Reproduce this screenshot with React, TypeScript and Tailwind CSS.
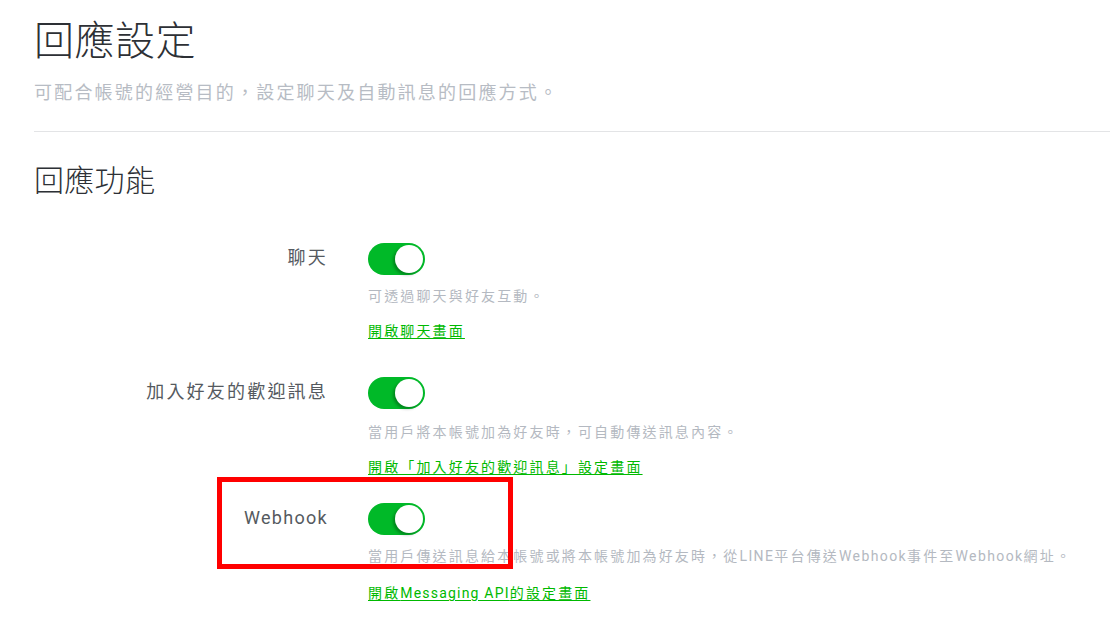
import React from "react";

const FONT = { fontFamily: 'Roboto, "Noto Sans CJK TC", "Noto Sans", sans-serif' };

function Runs({ text, latin }: { text: string; latin: string }) {
  const parts = text.split(/([A-Za-z][A-Za-z ]*[A-Za-z]|[A-Za-z])/);
  return (
    <>
      {parts.map((p, i) =>
        /[A-Za-z]/.test(p) ? (
          <span key={i} className={latin}>
            {p}
          </span>
        ) : (
          <React.Fragment key={i}>{p}</React.Fragment>
        )
      )}
    </>
  );
}

function Toggle() {
  return (
    <div className="relative h-[32px] w-[57px] shrink-0 rounded-full bg-[#00b928]">
      <div className="absolute right-[2px] top-[2px] h-[28px] w-[28px] rounded-full bg-white shadow-[-2px_2px_3px_rgba(0,0,0,0.28)]" />
    </div>
  );
}

type RowProps = {
  label: string;
  desc: string;
  link: string;
  mt: string;
  descMt: string;
  linkMt: string;
};

function Row({ label, desc, link, mt, descMt, linkMt }: RowProps) {
  return (
    <div className={`flex ${mt}`}>
      <div className="flex h-[32px] w-[294px] items-center justify-end pb-[4px] text-[18px] tracking-[2.2px] text-[#555a60]">
        <Runs text={label} latin="tracking-[1.3px]" />
      </div>
      <div className="ml-[40px] flex flex-col">
        <Toggle />
        <div className={`${descMt} h-[24px] text-[14px] leading-[24px] tracking-[2.15px] text-[#b4b9c1]`}>
          <Runs text={desc} latin="tracking-[1.4px]" />
        </div>
        <div className={`${linkMt} h-[24px] text-[14px] leading-[24px] tracking-[2.15px]`}>
          <a className="text-[#00b900] underline underline-offset-[2px]" href="#">
            <Runs text={link} latin="tracking-[1.2px]" />
          </a>
        </div>
      </div>
    </div>
  );
}

export default function App() {
  return (
    <div className="relative h-[620px] w-[1110px] overflow-hidden bg-white" style={FONT}>
      <div className="pl-[34px]">
        <div className="mt-[18px] h-[48px] text-[40px] font-light leading-[48px] tracking-[0.5px] text-[#2d3035]">回應設定</div>
        <div className="mt-[15px] h-[24px] text-[18px] leading-[24px] tracking-[2.2px] text-[#b7bcc4]">
          可配合帳號的經營目的，設定聊天及自動訊息的回應方式。
        </div>
        <div className="mt-[26px] h-px bg-[#e3e4e6]" />
        <div className="mt-[29px] h-[40px] text-[30px] font-light leading-[40px] tracking-[0.3px] text-[#2d3035]">回應功能</div>
      </div>
      <div className="pl-[34px]">
        <Row
          mt="mt-[42px]"
          descMt="mt-[9px]"
          linkMt="mt-[11px]"
          label="聊天"
          desc="可透過聊天與好友互動。"
          link="開啟聊天畫面"
        />
        <Row
          mt="mt-[34px]"
          descMt="mt-[11px]"
          linkMt="mt-[11px]"
          label="加入好友的歡迎訊息"
          desc="當用戶將本帳號加為好友時，可自動傳送訊息內容。"
          link="開啟「加入好友的歡迎訊息」設定畫面"
        />
        <Row
          mt="mt-[24px]"
          descMt="mt-[9px]"
          linkMt="mt-[13px]"
          label="Webhook"
          desc="當用戶傳送訊息給本帳號或將本帳號加為好友時，從LINE平台傳送Webhook事件至Webhook網址。"
          link="開啟Messaging API的設定畫面"
        />
      </div>
      <div className="pointer-events-none absolute left-[217px] top-[477px] h-[92px] w-[296px] border-[5px] border-[#ff0000]" />
    </div>
  );
}
